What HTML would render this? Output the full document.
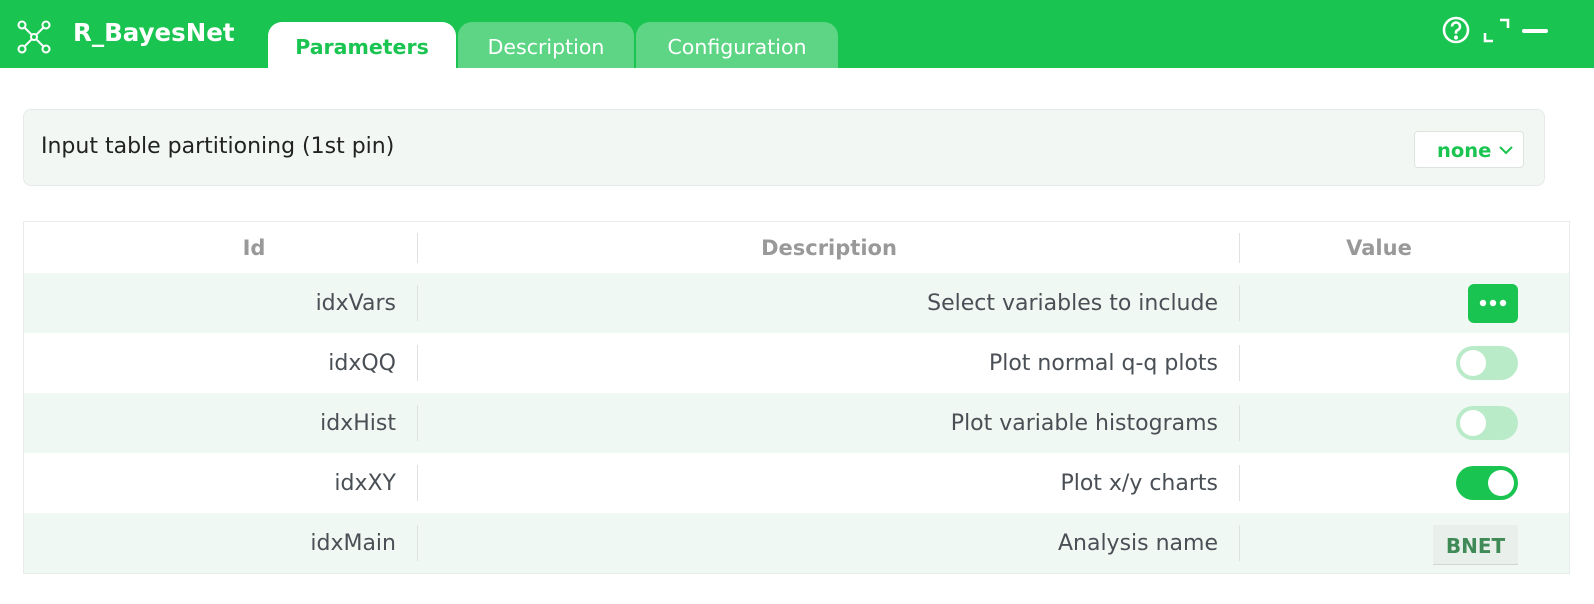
<!DOCTYPE html>
<html><head><meta charset="utf-8"><style>
*{box-sizing:border-box;margin:0;padding:0}
body{width:1594px;height:604px;background:#fff;font-family:"DejaVu Sans",sans-serif;position:relative;overflow:hidden}
.top{position:absolute;left:0;top:0;width:1594px;height:68px;background:#1ac450}
.title{position:absolute;left:73px;top:18px;color:#fff;font-weight:bold;font-size:24.5px}
.tab{position:absolute;top:22px;height:46px;border-radius:14px 14px 0 0;font-size:20.5px;text-align:center;line-height:50px;color:#fff}
.panel{position:absolute;left:23px;top:109px;width:1522px;height:77px;background:#f3f7f4;border:1px solid #e6ebe7;border-radius:8px}
.panel .lbl{position:absolute;left:17px;top:24px;font-size:22px;color:#222}
.sel{position:absolute;left:1390px;top:21px;width:110px;height:37px;background:#fff;border:1px solid #dde3de;border-radius:4px;color:#1ac450;font-weight:bold;font-size:19.5px;line-height:37px;padding-left:22px}
.tbl{position:absolute;left:23px;top:221px;width:1547px;height:353px;border:1px solid #e8ecea}
.row{position:absolute;left:0;width:1545px;height:60px}
.row.alt{background:#f0f8f3}
.c{position:absolute;top:0;height:60px;line-height:61px;font-size:22px;color:#4a4f55;text-align:right}
.sep{position:absolute;top:12px;width:1px;height:36px;background:#dfe3e0}
.hd{position:absolute;top:0;height:51px;line-height:53px;font-size:21px;font-weight:bold;color:#999;text-align:center}
.tg{position:absolute;left:1432px;top:13px;width:62px;height:34px;border-radius:17px;background:#b9ebc9}
.tg i{position:absolute;left:4px;top:4px;width:26px;height:26px;border-radius:50%;background:#fff}
.tg.on{background:#1ac450}.tg.on i{left:32px}
</style></head><body>
<div class="top">
<svg style="position:absolute;left:17px;top:20px" width="34" height="34" viewBox="0 0 34 34" fill="none" stroke="#fff" stroke-width="2"><circle cx="5" cy="5" r="3.5"/><circle cx="29" cy="5" r="3.5"/><circle cx="5" cy="29" r="3.5"/><circle cx="29" cy="29" r="3.5"/><circle cx="17" cy="17" r="3"/><path d="M7.5 7.5L14.8 14.8M26.5 7.5L19.2 14.8M7.5 26.5L14.8 19.2M26.5 26.5L19.2 19.2"/></svg>
<div class="title">R_BayesNet</div>
<div class="tab" style="left:268px;width:188px;background:#fff;color:#1ac450;font-weight:bold">Parameters</div>
<div class="tab" style="left:458px;width:176px;background:#5dd584">Description</div>
<div class="tab" style="left:636px;width:202px;background:#5dd584">Configuration</div>
<svg style="position:absolute;left:0;top:0" width="1594" height="68" fill="none" stroke="#fff" stroke-width="2.6">
<circle cx="1456" cy="30" r="12"/>
<path d="M1452 26.5a4 4 0 1 1 5.5 3.7c-1 .5-1.5 1.2-1.5 2.3v1.2"/>
<circle cx="1456" cy="37.5" r="0.8" fill="#fff"/>
<path d="M1500 20h8v8M1485 33v8h8"/>
<path d="M1524 31h22" stroke-width="4" stroke-linecap="round"/>
</svg>
</div>
<div class="panel"><div class="lbl">Input table partitioning (1st pin)</div><div class="sel">none<svg style="position:absolute;left:84px;top:14px" width="14" height="9" viewBox="0 0 14 9" fill="none" stroke="#1ac450" stroke-width="2"><path d="M1 1l6 6 6-6"/></svg></div></div>
<div class="tbl">
<div class="hd" style="left:130px;width:200px;">Id</div>
<div class="hd" style="left:394px;width:822px">Description</div>
<div class="hd" style="left:1255px;width:200px">Value</div>
<div class="sep" style="left:393px;top:11px;height:30px"></div><div class="sep" style="left:1215px;top:11px;height:30px"></div>

<div class="row alt" style="top:51px"><div class="c" style="left:0;width:372px">idxVars</div><div class="sep" style="left:393px"></div><div class="c" style="left:400px;width:794px">Select variables to include</div><div class="sep" style="left:1215px"></div>
<div style="position:absolute;left:1444px;top:11px;width:50px;height:39px;border-radius:6px;background:#1ac450"><svg width="50" height="39"><circle cx="15" cy="19" r="3.2" fill="#fff"/><circle cx="25" cy="19" r="3.2" fill="#fff"/><circle cx="35" cy="19" r="3.2" fill="#fff"/></svg></div></div>

<div class="row" style="top:111px"><div class="c" style="left:0;width:372px">idxQQ</div><div class="sep" style="left:393px"></div><div class="c" style="left:400px;width:794px">Plot normal q-q plots</div><div class="sep" style="left:1215px"></div><div class="tg"><i></i></div></div>

<div class="row alt" style="top:171px"><div class="c" style="left:0;width:372px">idxHist</div><div class="sep" style="left:393px"></div><div class="c" style="left:400px;width:794px">Plot variable histograms</div><div class="sep" style="left:1215px"></div><div class="tg"><i></i></div></div>

<div class="row" style="top:231px"><div class="c" style="left:0;width:372px">idxXY</div><div class="sep" style="left:393px"></div><div class="c" style="left:400px;width:794px">Plot x/y charts</div><div class="sep" style="left:1215px"></div><div class="tg on"><i></i></div></div>

<div class="row alt" style="top:291px"><div class="c" style="left:0;width:372px">idxMain</div><div class="sep" style="left:393px"></div><div class="c" style="left:400px;width:794px">Analysis name</div><div class="sep" style="left:1215px"></div>
<div style="position:absolute;left:1409px;top:12px;width:85px;height:40px;background:#e9efeb;border-bottom:1px solid #cfd6d1;color:#3f8a57;font-weight:bold;font-size:20px;text-align:center;line-height:42px">BNET</div></div>
</div>
</body></html>
